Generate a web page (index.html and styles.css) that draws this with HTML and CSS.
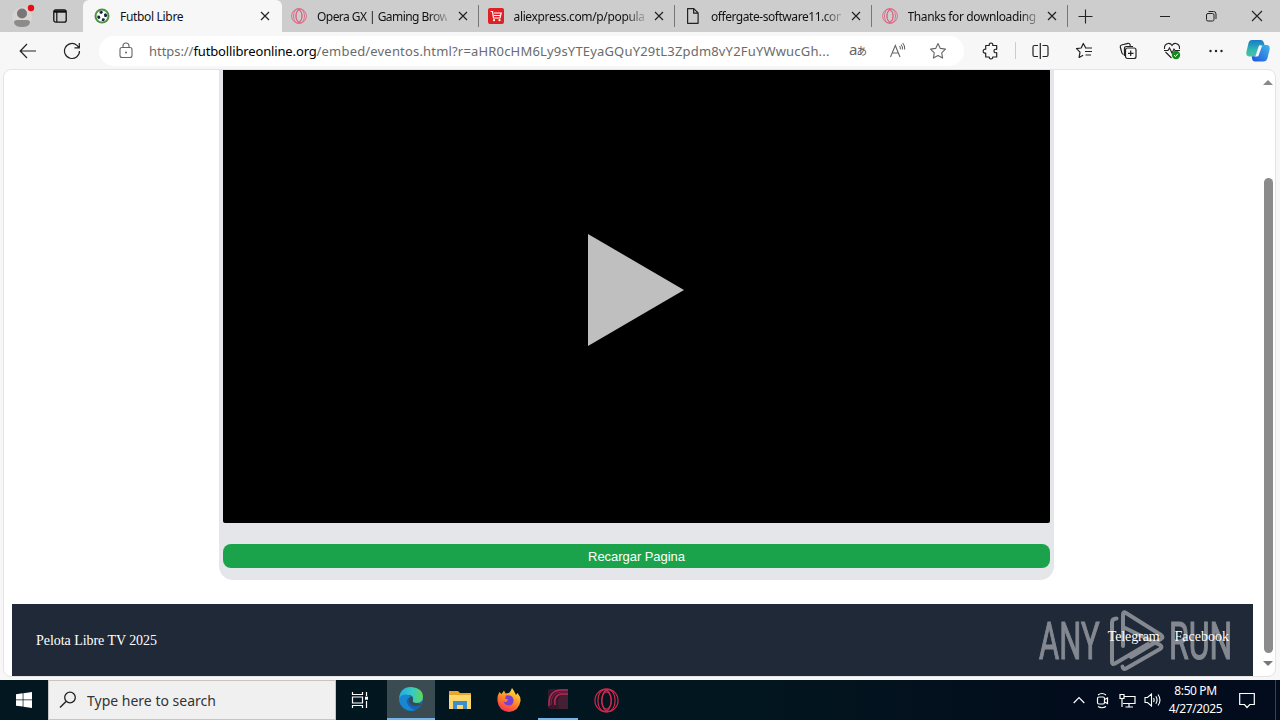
FILE: index.html
```html
<!DOCTYPE html>
<html lang="es">
<head>
<meta charset="utf-8">
<title>Futbol Libre</title>
<link rel="stylesheet" href="styles.css">
</head>
<body>
<svg class="defs" width="0" height="0">
  <symbol id="close" viewBox="0 0 10 10"><path d="M1 1l8 8M9 1l-8 8" fill="none" stroke="#222" stroke-width="1.2"/></symbol>
  <symbol id="opera" viewBox="0 0 16 16"><g fill="none" stroke="currentColor" stroke-width=".75"><circle cx="8" cy="8" r="7.4"/><ellipse cx="8" cy="8" rx="3" ry="5.5"/><ellipse cx="6.800" cy="8" rx="4.300" ry="7"/><ellipse cx="9.200" cy="8" rx="4.300" ry="7"/></g></symbol>
</svg>
<header class="tabs">
  <div class="profile">
    <svg width="24" height="24" viewBox="0 0 24 24"><circle cx="11" cy="13" r="10" fill="#d9d4d2"/><circle cx="11" cy="9.500" r="5" fill="#777"/><path d="M3 18.500q0-2.500 3-2.500h10q3 0 3 2.500q-1 4.500-8 4.500t-8-4.500z" fill="#8b8b8b"/><circle cx="20" cy="4" r="3.200" fill="#e60d16"/></svg>
  </div>
  <div class="workspaces">
    <svg width="14" height="14" viewBox="0 0 14 14"><rect x=".8" y=".8" width="12.400" height="12.400" rx="2" fill="none" stroke="#111" stroke-width="1.300"/><path d="M1 2.500h12" stroke="#111" stroke-width="2.400"/><path d="M3.800 3v10" stroke="#111" stroke-width="1.200"/></svg>
  </div>
  <div class="tab active">
    <svg class="fav" viewBox="0 0 16 16"><circle cx="8" cy="8" r="7.500" fill="#4d9144"/><circle cx="8" cy="8" r="5.500" fill="#fff"/><path d="M5.500 3.500l2.500-.8 1 1.600-1.500 1.800-2-.8zM10 6l2-.8 1.300 2-1 2-2-.5zM3.500 7.500l2.300.3.700 2.200-1.800 1.200-1.500-1.700zM8 10.500l2.200-.3.800 1.500-1.500 1.500-1.800-.5z" fill="#15253a"/></svg>
    <span class="label">Futbol Libre</span><svg class="x"><use href="#close"/></svg>
  </div>
  <div class="tab t1"><svg class="fav op"><use href="#opera"/></svg><span class="label fade">Opera GX | Gaming Brow</span><svg class="x"><use href="#close"/></svg></div>
  <div class="tab t2"><svg class="fav" viewBox="0 0 16 16"><rect width="16" height="16" rx="2" fill="#de2027"/><path d="M2.500 3.500h2l1 6.500h6.500l1.200-5H6M6 7.500h6.500" fill="none" stroke="#fff" stroke-width="1.200"/><circle cx="6" cy="12.200" r="1.100" fill="#fff"/><circle cx="11.500" cy="12.200" r="1.100" fill="#fff"/></svg><span class="label fade">aliexpress.com/p/popula</span><svg class="x"><use href="#close"/></svg></div>
  <div class="tab t3"><svg class="fav" viewBox="0 0 16 16"><path d="M2.600.7h6.200l4.300 4.300v10.300H2.600zM8.600.8v4.400H13" fill="none" stroke="#222" stroke-width="1.200" stroke-linejoin="round"/></svg><span class="label fade">offergate-software11.com</span><svg class="x"><use href="#close"/></svg></div>
  <div class="tab t4"><svg class="fav op"><use href="#opera"/></svg><span class="label fade">Thanks for downloading</span><svg class="x"><use href="#close"/></svg></div>
  <div class="new"><svg width="15" height="15" viewBox="0 0 15 15"><path d="M7.500 .5v14M.5 7.500h14" stroke="#222" stroke-width="1.100"/></svg></div>
  <div class="winctl">
    <svg width="12" height="12" viewBox="0 0 12 12"><path d="M1 6.500h10" stroke="#222"/></svg>
    <svg width="12" height="12" viewBox="0 0 12 12"><g fill="none" stroke="#222"><rect x="1.500" y="3.500" width="7.500" height="7.500" rx="1.500"/><path d="M3.500 1.500h5q2.500 0 2.500 2.500v5"/></g></svg>
    <svg width="12" height="12" viewBox="0 0 12 12"><path d="M1 1l10 10M11 1L1 11" stroke="#222" stroke-width="1.100"/></svg>
  </div>
</header>
<nav class="toolbar">
  <div class="slot back"><svg width="18" height="16" viewBox="0 0 18 16"><path d="M17 8H1.500M8 1L1.200 8 8 15" fill="none" stroke="#222" stroke-width="1.200"/></svg></div>
  <div class="slot"><svg width="18" height="18" viewBox="0 0 18 18"><path d="M16.500 9a7.500 7.500 0 1 1-2.500-5.600L16 5.500M16.300 1v4.800h-4.800" fill="none" stroke="#222" stroke-width="1.200"/></svg></div>
  <div class="address">
    <svg class="lock" width="14" height="17" viewBox="0 0 14 17"><g fill="none" stroke="#666" stroke-width="1.100"><rect x="1" y="5.500" width="12" height="10" rx="2"/><path d="M4 5.500V4q0-3 3-3t3 3v1.500"/></g><circle cx="7" cy="10.500" r="1" fill="#666"/></svg>
    <span class="url"><span class="scheme">https://</span><b>futbollibreonline.org</b>/embed/eventos.html?r=aHR0cHM6Ly9sYTEyaGQuY29tL3Zpdm8vY2FuYWwucGh...</span>
    <div class="slot translate"><svg width="20" height="22" viewBox="0 0 20 22"><text x="1" y="15" class="lat">a</text><text x="8.500" y="15" class="kana">あ</text></svg></div>
    <div class="slot"><svg width="18" height="18" viewBox="0 0 18 18"><path d="M1.500 15L6.300 3.500 11 15M3.200 11h6.200M10.500 4q1.300 1.500.8 3.300M12 2.500q2 2.200 1.400 5M13.700 1q2.600 3 2 6.500" fill="none" stroke="#666" stroke-width="1.100"/></svg></div>
    <div class="slot"><svg width="18" height="18" viewBox="0 0 18 18"><path d="M9 1.500l2.300 4.900 5.200.7-3.800 3.700.9 5.300L9 13.600l-4.600 2.500.9-5.300L1.500 7.100l5.200-.7z" fill="none" stroke="#666" stroke-width="1.100" stroke-linejoin="round"/></svg></div>
  </div>
  <div class="slot ext"><svg width="18" height="18" viewBox="0 0 18 18"><path d="M3.700 3.500h3.500q-.2-2.500 1.800-2.500t1.800 2.500h3.900v3.800q-2.700-.3-2.700 1.700t2.700 1.700v4.300h-4q.2 1.800-1.700 1.800T7.200 15H3.700v-3.800Q1.200 11.300 1.200 9.200t2.500-2z" fill="none" stroke="#222" stroke-width="1.200" stroke-linejoin="round"/></svg></div>
  <i class="rule"></i>
  <div class="slot"><svg width="17" height="18" viewBox="0 0 17 18"><path d="M6 3.500H2.500q-1.500 0-1.500 1.500v8q0 1.500 1.500 1.500H6M10.500 3.500h4Q16 3.500 16 5v8q0 1.500-1.500 1.500h-4M8.300 1v16" fill="none" stroke="#222" stroke-width="1.200"/></svg></div>
  <div class="slot"><svg width="18" height="18" viewBox="0 0 18 18"><path d="M10.500 5.500L8.300 1.500 6.200 6 1.500 6.600l3.500 3.600-.9 5.300 4-2.200M10 6h7M10 9.500h7M10.500 13H16" fill="none" stroke="#222" stroke-width="1.200" stroke-linejoin="round"/></svg></div>
  <div class="slot"><svg width="18" height="18" viewBox="0 0 18 18"><g fill="none" stroke="#222" stroke-width="1.200"><path d="M4.500 12.500Q3 12 2.800 10.500L1.300 5q-.3-1.600 1.200-2L9 1.300q1.500-.3 2 1.200l.3 1.300M5.500 14V6.500q0-2 2-2H14"/><rect x="6.500" y="6" width="10.500" height="10.500" rx="2"/><path d="M11.700 8.500v5.500M9 11.300h5.500"/></g></svg></div>
  <div class="slot"><svg width="18" height="18" viewBox="0 0 18 18"><path d="M1.500 7q-.5-4.500 3.500-5.500Q7.500 1 9 3.500 10.500 1 13 1.500q4 1 3.500 5.500M2.500 10l6 6M1 8.500h4l1.500-2.500L9 11l2-4 1 1.500h5" fill="none" stroke="#222" stroke-width="1.100"/><circle cx="13" cy="13" r="4.200" fill="#16881f"/><path d="M11 13.200l1.500 1.300 2.500-2.800" fill="none" stroke="#fff"/></svg></div>
  <div class="slot"><svg width="16" height="4" viewBox="0 0 16 4"><g fill="#222"><circle cx="2.500" cy="2" r="1.200"/><circle cx="8" cy="2" r="1.200"/><circle cx="13.500" cy="2" r="1.200"/></g></svg></div>
  <div class="slot copilot"><svg width="24" height="24" viewBox="0 0 24 24"><defs><linearGradient id="ca" x1="0" y1="0" x2="0" y2="1"><stop offset="0" stop-color="#1b78c9"/><stop offset=".6" stop-color="#2fb9b0"/><stop offset="1" stop-color="#50c3a0"/></linearGradient><linearGradient id="cb" x1="1" y1="0" x2="0" y2="1"><stop offset="0" stop-color="#45b4ed"/><stop offset="1" stop-color="#1d55d8"/></linearGradient></defs><path d="M6 1h9q2 0 3 3l.5 2h-3q-2.500 0-3.500 3l-2 6q-1 2.500-3.500 2.500H3Q-.5 17 .5 12.500L2.500 4Q3.300 1 6 1z" fill="url(#ca)"/><path d="M15.500 6H21q3.500.5 2.500 5l-2 8q-1 3.500-4 3.500H9q-2.500 0-3-3l-.3-2q3.300 0 4.300-2.500l2.500-6.500Q13.500 6 15.500 6z" fill="url(#cb)"/><path d="M13.200 6.500h3l-3.600 10q-.3 1-1.200 1H8.200q1.300-.5 2-2.500z" fill="#f7f7f7"/></svg></div>
</nav>
<main class="frame">
  <div class="page">
    <section class="player">
      <div class="video"><svg width="96" height="112" viewBox="0 0 96 112"><path d="M0 0l96 56-96 56z" fill="#bfbfbf"/></svg></div>
      <button class="reload">Recargar Pagina</button>
    </section>
    <footer class="footer">
      <span class="copy">Pelota Libre TV 2025</span>
      <div class="links"><a class="tg">Telegram</a><a class="fb">Facebook</a></div>
      <svg class="mark" width="194" height="64" viewBox="0 0 194 64">
        <g class="marktext"><text transform="translate(0 50) scale(.68 1)" textLength="89" lengthAdjust="spacingAndGlyphs">ANY</text><text transform="translate(130 50) scale(.68 1)" textLength="93" lengthAdjust="spacingAndGlyphs">RUN</text></g>
        <g fill="none" stroke="#8f939b" stroke-width="4" stroke-linejoin="round" stroke-linecap="round"><path d="M77.500 9.500q-4.500 0-4.500 4V53q0 3 3 1.500L109 35"/><path d="M84 37V6q0-4 3-2l35 22q3 2.500 0 4L92 48"/><path d="M84 18l37 18q3 2 0 4L87 59.500q-3 1.500-3.500-2"/></g>
      </svg>
    </footer>
  </div>
  <div class="scroll"><i class="up"></i><i class="thumb"></i><i class="down"></i></div>
</main>
<div class="taskbar">
  <div class="start"><svg width="16" height="16" viewBox="0 0 16 16"><path d="M0 2.300L6.700 1.300v6.200H0zM7.400 1.200L16 0v7.500H7.400zM0 8.300h6.700v6.300L0 13.700zM7.400 8.300H16V16l-8.600-1.200z" fill="#fff"/></svg></div>
  <div class="search"><svg width="18" height="18" viewBox="0 0 18 18"><circle cx="11" cy="6.500" r="5.300" fill="none" stroke="#222" stroke-width="1.300"/><path d="M7 10.500L1 16.500" stroke="#222" stroke-width="1.400"/></svg><span>Type here to search</span></div>
  <div class="app view"><svg width="18" height="16" viewBox="0 0 18 16"><path d="M1.500 0v2.500h10V0M1.500 16v-2.500h10V16M1.500 5h10v6h-10zM15.500 0v4M15.500 9v7" fill="none" stroke="#fff" stroke-width="1.200"/><rect x="14" y="4.700" width="3" height="3" fill="#fff"/></svg></div>
  <div class="app on"><svg width="24" height="24" viewBox="0 0 24 24"><defs><linearGradient id="eg" x1="0" x2="1"><stop offset="0" stop-color="#27a9df"/><stop offset=".55" stop-color="#37cbc2"/><stop offset="1" stop-color="#63d652"/></linearGradient></defs><circle cx="12" cy="12" r="12" fill="#1764b5"/><path d="M0 12Q1 0 12 0q12 1 12 10 0 6-7 6-4-.3-3-3 1-5-5-5-7 0-9 4z" fill="url(#eg)"/><path d="M0 12q2-5 7-4.500 4 .5 4.500 2.500Q7 11 8 16q2 5 8 7.200Q12 24.500 8 23 0 19 0 12z" fill="#1887d1"/><path d="M11.500 10Q8 13 11 17q5 4 11.500.5Q19 15.800 17 16q-5 0-3-4 0-2-2.500-2z" fill="#3a4c51"/></svg></div>
  <div class="app"><svg width="22" height="20" viewBox="0 0 22 20"><path d="M0 1h9l2 2h11v16H0z" fill="#e8a62c"/><path d="M0 5h22v14H0z" fill="#fbd76c"/><path d="M4 19v-8h14v8h-4v-4H8v4z" fill="#3b8fcd"/></svg></div>
  <div class="app"><svg width="24" height="24" viewBox="0 0 24 24"><defs><linearGradient id="fg" x1=".7" y1="0" x2=".2" y2="1"><stop offset="0" stop-color="#ffe33e"/><stop offset=".5" stop-color="#ff8525"/><stop offset="1" stop-color="#f5275e"/></linearGradient></defs><path d="M1 7l1.500-3 2 2L7 2.500l1.500 3L12 5q2-2 3-5l2 3 2 4 1.500-2Q24 9 23.500 13 22 23 12 24 1.500 23 .5 13 .3 9 1 7z" fill="url(#fg)"/><path d="M9 7.500q6-1 7.500 4 .5 5-4 6-5 0-6-4 2 1 3.500 0l1-2-3-1z" fill="#7a3fcf"/></svg></div>
  <div class="app gx"><svg width="22" height="22" viewBox="0 0 22 22"><rect x="1" y="1" width="20" height="20" rx="2" fill="#38182b"/><path d="M11.500 18Q10 9 15 7l6-1v15h-9.500z" fill="#442034"/><path d="M2 18Q1 2 15 2h6M8 17Q6.500 6.500 15 6h6" fill="none" stroke="#b92a58" stroke-width="1.500"/><path d="M4 17Q3.500 4 15 4h6" fill="none" stroke="#8c2348" stroke-width="1"/></svg></div>
  <div class="app"><svg class="opbig"><use href="#opera"/></svg></div>
  <div class="tray">
    <svg width="12" height="8" viewBox="0 0 12 8"><path d="M.7 7L6 1.500 11.300 7" fill="none" stroke="#fff" stroke-width="1.200"/></svg>
    <svg class="cam" width="13" height="17" viewBox="0 0 13 17"><g fill="none" stroke="#fff" stroke-width="1.200"><rect x="1.500" y="5" width="7" height="7" rx="1.500"/><path d="M8.500 7.500L11.500 6v5.500l-3-1.500M2 3Q6 0 10 3M2 14.500q4 2.500 8 0"/></g></svg>
    <svg class="net" width="17" height="15" viewBox="0 0 17 15"><path d="M5 3.500h11v7H4M1 1.500h4v4H1zM3 5.500V14M10 10.500V14M6.500 14H14" fill="none" stroke="#fff" stroke-width="1.200"/></svg>
    <svg width="17" height="14" viewBox="0 0 17 14"><path d="M1 4.500h2.500l4-3.500v12l-4-3.500H1zM9.500 5q1.300 2 0 4M11.800 3.300q2.500 3.700 0 7.400M14 1.500q4 5.500 0 11" fill="none" stroke="#fff" stroke-width="1.100"/></svg>
  </div>
  <div class="clock"><span>8:50 PM</span><span>4/27/2025</span></div>
  <div class="notice"><svg width="16" height="17" viewBox="0 0 16 17"><path d="M.7 1.500h14.600v11h-4.500L8 15.500l-2.500-3H.7z" fill="none" stroke="#fff" stroke-width="1.200"/></svg></div>
</div>
</body>
</html>
```
FILE: styles.css
```css
* { box-sizing: border-box; }
body { margin: 0; width: 1280px; height: 720px; overflow: hidden; display: flex; flex-direction: column; background: #f7f7f7; font-family: "Noto Sans", sans-serif; color: #111; }
svg { display: block; flex: none; }
.defs { position: absolute; }
.tabs { height: 32px; flex: none; display: flex; background: #cdcdcd; }
.profile { width: 48px; padding: 4px 0 0 11px; }
.workspaces { width: 35px; padding: 9px 0 0 5px; }
.tab { height: 32px; display: flex; align-items: center; padding: 0 10px 0 9px; font-size: 12px; border-right: 1px solid #777; border-image: linear-gradient(transparent 6px, #777 6px, #777 26px, transparent 26px) 1; }
.tab.active { width: 199px; background: #f7f7f7; border: 0; border-radius: 6px 6px 0 0; padding-left: 11px; padding-right: 12px; }
.t4 { width: 196px; }
.t1, .t2, .t3 { width: 196.500px; }
.t3, .t4 { padding-left: 10px; }
.fav { width: 16px; height: 16px; margin-right: 10px; }
.op { color: #dc5575; }
.label { flex: 1; white-space: nowrap; letter-spacing: -.32px; }
.t1 .label { letter-spacing: -.55px; }
.t2 .label { letter-spacing: -.35px; }
.t3 .label { letter-spacing: -.45px; }
.t4 .label { letter-spacing: -.38px; }
.fade { width: 130px; flex: none; margin-right: auto; mask-image: linear-gradient(90deg, #000 86%, transparent 104%); }
.x { width: 10px; height: 10px; }
.new { width: 36px; display: grid; place-items: center; }
.winctl { display: flex; align-items: center; gap: 34px; margin-left: 55px; }
.toolbar { height: 37px; flex: none; display: flex; align-items: center; padding-left: 6px; }
.slot { width: 44px; height: 36px; display: grid; place-items: center; flex: none; }
.address { width: 865px; height: 30px; margin-left: 5px; border-radius: 15px; background: #fff; display: flex; align-items: center; }
.address .slot { width: 40px; }
.lock { margin: 0 16px 0 20px; }
.url { width: 689px; white-space: nowrap; font-size: 13px; color: #6b6b6b; letter-spacing: .18px; }
.scheme { letter-spacing: -.05px; }
.url b { font-weight: 400; color: #000; letter-spacing: -.14px; }
.lat { font: 15px "Noto Sans", sans-serif; fill: #666; }
.kana { font: 10.500px "Noto Sans CJK JP", sans-serif; fill: #555; }
.ext { margin-left: 5px; }
.rule { width: 1px; height: 17px; background: #ccc; margin: 0 2px 0 2px; }
.toolbar .slot.copilot { width: 40px; }
.frame { width: 1273px; height: 608px; margin-left: 3px; flex: none; display: flex; background: #fff; border: 1px solid #e4e4e4; border-radius: 8px; overflow: hidden; }
.page { width: 1257px; padding-left: 8px; }
.player { width: 835px; height: 510px; margin-left: 207px; background: #e4e6e9; border-radius: 0 0 14px 14px; padding: 0 4px; }
.video { height: 453px; background: #000; display: grid; place-items: center; padding: 0 1px 13px 0; border-radius: 0 0 2px 2px; }
.reload { display: block; width: 100%; height: 24px; margin-top: 21px; padding: 0; border: 0; border-radius: 8px; background: #1aa34a; color: #fff; font: 13px "Liberation Sans", sans-serif; letter-spacing: -.05px; }
.footer { position: relative; width: 1241px; height: 72px; margin-top: 24px; padding: 1px 24px 0; display: flex; justify-content: space-between; align-items: center; background: #1f2937; color: #fff; font: 14px "Liberation Serif", serif; }
.copy { letter-spacing: -.05px; }
.links { position: relative; z-index: 1; display: flex; gap: 15px; margin-bottom: 8px; }
.tg { letter-spacing: -.1px; }
.mark { position: absolute; left: 1027px; top: 5px; opacity: .9; }
.marktext { font: 51px Roboto, sans-serif; fill: #8f939b; stroke: #8f939b; stroke-width: 1.200px; }
.scroll { width: 14px; display: flex; flex-direction: column; align-items: center; padding: 10px 0; }
.up, .down { border: 5px solid transparent; border-top: 0; border-bottom: 5px solid #888; }
.down { border-bottom: 0; border-top: 5px solid #777; }
.thumb { width: 9px; height: 475px; margin: 93px 0 8px; border-radius: 5px; background: #8b8b8b; }
.taskbar { height: 40px; flex: none; margin-top: 3px; display: flex; background: linear-gradient(90deg, #02171f, #02161f 60%, #020c1c 85%); color: #fff; }
.start { width: 48px; display: grid; place-items: center; }
.search { width: 288px; display: flex; align-items: center; gap: 10px; padding-left: 10px; background: #f0f0f0; border: 1px solid #c8c4c4; color: #333; font-size: 14px; }
.app { width: 49px; height: 40px; display: grid; place-items: center; }
.app.view { width: 51px; padding-right: 4px; }
.app.on { width: 48px; background: #3a4c51; border-bottom: 2px solid #76b3e8; }
.gx { width: 40px; margin: 0 4px 0 5px; border-bottom: 2px solid #76b3e8; }
.opbig { width: 25px; height: 25px; color: #cf2a50; }
.tray { width: 88px; margin-left: 442px; display: flex; align-items: center; justify-content: space-between; }
.cam { margin-left: 3px; }
.net { margin-left: 1px; }
.clock { width: 69px; display: flex; flex-direction: column; align-items: center; justify-content: center; font-size: 12px; line-height: 18px; letter-spacing: -.4px; }
.notice { width: 46px; border-right: 1px solid #354050; display: grid; place-items: center; padding-right: 11px; }
```
